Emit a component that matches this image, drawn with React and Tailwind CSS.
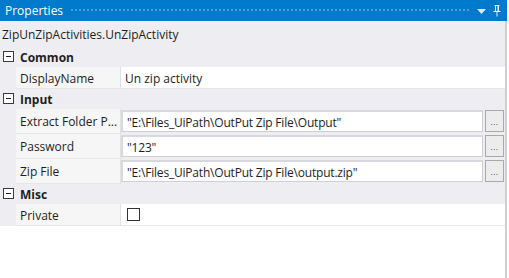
import React from "react";

const Minus = () => (
  <svg width="11" height="11" viewBox="0 0 11 11" className="shrink-0">
    <rect x="0.5" y="0.5" width="10" height="10" fill="#fff" stroke="#3c3c3c" />
    <line x1="3" y1="5.5" x2="8" y2="5.5" stroke="#1e1e1e" />
  </svg>
);

const Category = ({ label }) => (
  <div className="h-[20px] bg-[#eeeef2] flex items-center pl-[3px] gap-[6px] border-b border-[#eeeef2]">
    <Minus />
    <span className="font-bold text-[#1e1e1e] pt-[2px]">{label}</span>
  </div>
);

const Row = ({ name, children }) => (
  <div className="h-[22px] flex">
    <div className="w-[16px] bg-[#eeeef2] shrink-0" />
    <div className="w-[104px] shrink-0 bg-[#f6f6f6] border-b border-[#e6e6e6] flex items-center pl-[4px] pt-[2px] text-[#1e1e1e] whitespace-nowrap overflow-hidden">
      {name}
    </div>
    <div className="w-[1px] bg-[#e2e2e2] shrink-0" />
    <div className="flex-1 bg-white border-b border-[#e6e6e6] flex items-center min-w-0">{children}</div>
  </div>
);

const BoxRow = ({ name, value }) => (
  <div className="h-[25px] flex">
    <div className="w-[16px] bg-[#eeeef2] shrink-0" />
    <div className="w-[104px] shrink-0 bg-[#f6f6f6] border-b border-[#e6e6e6] flex items-center pl-[4px] pt-[2px] text-[#1e1e1e] whitespace-nowrap overflow-hidden">
      {name}
    </div>
    <div className="w-[1px] bg-[#e2e2e2] shrink-0" />
    <div className="flex-1 bg-[#eeeef2] flex items-start pt-[1px] gap-[2px] pr-[1px] min-w-0">
      <div className="flex-1 h-[22px] bg-white border border-[#cfd0d6] border-t-2 border-l-2 border-t-[#d8d9de] border-l-[#d8d9de] flex items-center pl-[4px] pt-[2px] text-[#1e1e1e] whitespace-nowrap overflow-hidden tracking-[-0.2px]">
        {value}
      </div>
      <div className="w-[19px] h-[22px] bg-[#ececec] border border-[#a9a9a9] flex items-end justify-center pb-[5px] text-[8px] leading-none text-[#333] tracking-[0.5px]">
        ...
      </div>
    </div>
  </div>
);

export default function App() {
  return (
    <div className="w-[509px] h-[278px] bg-white font-['Segoe_UI','Open_Sans',sans-serif] text-[12px] leading-none overflow-hidden">
      <div className="w-[507px] h-full flex flex-col">
        <div className="h-[21px] bg-[#007acc] flex items-center pl-[5px] pr-[6px] shrink-0">
          <span className="text-white text-[12px] pt-[1px]">Properties</span>
          <div className="flex-1 ml-[7px] mr-[8px] h-[5px] bg-[radial-gradient(circle,#4d9fd8_0.8px,transparent_1px)] bg-[length:4px_4px]" />
          <svg width="9" height="6" viewBox="0 0 9 6" className="mr-[7px] mt-[3px]">
            <polygon points="0,0 9,0 4.5,5" fill="#d8ecf8" />
          </svg>
          <svg width="8" height="12" viewBox="0 0 8 12">
            <path d="M1.5 0.5 H6.5 M2.5 0.5 V6.5 M5.5 0.5 V6.5 M0.5 6.5 H7.5 M4 6.5 V11.5" stroke="#e8f3fb" strokeWidth="1" fill="none" />
            <rect x="4.5" y="1" width="1" height="5.5" fill="#e8f3fb" />
          </svg>
        </div>
        <div className="flex-1 border-r-2 border-[#cfcfcf] flex flex-col">
          <div className="h-[26px] bg-[#eeeef2] flex items-center pl-[2px] pt-[2px] text-[#1e1e1e] shrink-0">
            ZipUnZipActivities.UnZipActivity
          </div>
          <Category label="Common" />
          <Row name="DisplayName">
            <span className="pl-[4px] pt-[2px] text-[#1e1e1e]">Un zip activity</span>
          </Row>
          <Category label="Input" />
          <BoxRow name="Extract Folder P..." value={'"E:\\Files_UiPath\\OutPut Zip File\\Output"'} />
          <BoxRow name="Password" value={'"123"'} />
          <BoxRow name="Zip File" value={'"E:\\Files_UiPath\\OutPut Zip File\\output.zip"'} />
          <Category label="Misc" />
          <Row name="Private">
            <div className="ml-[6px] w-[13px] h-[13px] border border-[#333] bg-white" />
          </Row>
          <div className="flex-1 bg-white" />
        </div>
      </div>
    </div>
  );
}
